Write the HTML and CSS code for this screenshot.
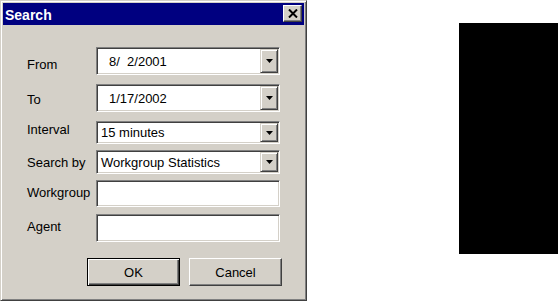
FILE: index.html
```html
<!DOCTYPE html>
<html lang="en">
<head>
    <meta charset="UTF-8">
    <title>Search</title>
    <link rel="stylesheet" href="styles.css">
</head>
<body>

    <div class="dialog">
        <div class="titlebar">
            <span class="title">Search</span>
            <button class="close-btn" type="button">
                <svg width="10" height="9" viewBox="0 0 10 9">
                    <path d="M1 0.5 L9 8.5 M9 0.5 L1 8.5" stroke="#000" stroke-width="2" fill="none"/>
                </svg>
            </button>
        </div>

        <form class="search-form">
            <div class="form-row">
                <label class="field-label label-from">From</label>
                <div class="combo combo-date">
                    <span class="combo-value">8/&nbsp;&nbsp;2/2001</span>
                    <span class="drop-btn"><svg width="7" height="4" viewBox="0 0 7 4"><polygon points="0,0 7,0 3.5,4" fill="#000"/></svg></span>
                </div>
            </div>

            <div class="form-row row-to">
                <label class="field-label label-to">To</label>
                <div class="combo combo-date">
                    <span class="combo-value">1/17/2002</span>
                    <span class="drop-btn"><svg width="7" height="4" viewBox="0 0 7 4"><polygon points="0,0 7,0 3.5,4" fill="#000"/></svg></span>
                </div>
            </div>

            <div class="form-row row-interval">
                <label class="field-label label-interval">Interval</label>
                <div class="combo combo-short">
                    <span class="combo-value">15 minutes</span>
                    <span class="drop-btn"><svg width="7" height="4" viewBox="0 0 7 4"><polygon points="0,0 7,0 3.5,4" fill="#000"/></svg></span>
                </div>
            </div>

            <div class="form-row row-searchby">
                <label class="field-label">Search by</label>
                <div class="combo combo-searchby">
                    <span class="combo-value">Workgroup Statistics</span>
                    <span class="drop-btn"><svg width="7" height="4" viewBox="0 0 7 4"><polygon points="0,0 7,0 3.5,4" fill="#000"/></svg></span>
                </div>
            </div>

            <div class="form-row row-workgroup">
                <label class="field-label">Workgroup</label>
                <div class="combo text-box workgroup-box"></div>
            </div>

            <div class="form-row row-agent">
                <label class="field-label">Agent</label>
                <div class="combo text-box"></div>
            </div>

            <div class="button-row">
                <button class="push-btn is-default" type="button">OK</button>
                <button class="push-btn" type="button">Cancel</button>
            </div>
        </form>
    </div>

    <div class="blackout"></div>

</body>
</html>
```

FILE: styles.css
```css
body {
    font-family: "Liberation Sans", Arial, sans-serif;
    font-size: 13px;
    color: #000;
    background-color: #fff;
    margin: 0;
    display: flex;
    align-items: flex-start;
}

/* window frame, classic 3D look */
.dialog {
    width: 307px;
    height: 301px;
    box-sizing: border-box;
    background-color: #d4d0c8;
    border: 1px solid;
    border-color: #d4d0c8 #404040 #404040 #d4d0c8;
    box-shadow: inset 1px 1px #fff, inset -1px -1px #808080;
    padding: 2px;
}

.titlebar {
    height: 22px;
    background-color: #000080;
    color: #fff;
    display: flex;
    align-items: flex-start;
    justify-content: space-between;
}

.title {
    font-weight: bold;
    font-size: 14px;
    line-height: 16px;
    padding: 4px 0 0 2px;
}

.close-btn {
    width: 19px;
    height: 17px;
    margin: 2px 2px 0 0;
    padding: 0;
    box-sizing: border-box;
    background-color: #d4d0c8;
    border: 1px solid;
    border-color: #fff #404040 #404040 #fff;
    box-shadow: inset -1px -1px #808080;
    display: flex;
    align-items: center;
    justify-content: center;
}

.search-form {
    margin: 0;
    padding: 22px 0 0 24px;
}

.form-row {
    display: flex;
    align-items: flex-start;
}

.row-to { margin-top: 9px; }
.row-interval { margin-top: 9px; }
.row-searchby { margin-top: 6px; }
.row-workgroup { margin-top: 6px; }
.row-agent { margin-top: 7px; }

.field-label {
    width: 69px;
    line-height: 15px;
    padding-top: 5px;
}

.label-from { padding-top: 10px; }
.label-to { padding-top: 8px; }
.label-interval { padding-top: 1px; }

/* sunken white field */
.combo {
    width: 184px;
    height: 28px;
    box-sizing: border-box;
    display: flex;
    align-items: center;
    background-color: #fff;
    border: 1px solid;
    border-color: #808080 #fff #fff #808080;
    box-shadow: inset 1px 1px #404040, inset -1px -1px #d4d0c8;
    padding: 1px;
}

.combo-short { height: 23px; }
.combo-searchby { height: 24px; }
.workgroup-box { height: 27px; }

.combo-value {
    flex-grow: 1;
    line-height: 15px;
    padding-left: 3px;
    white-space: nowrap;
}

.combo-date .combo-value {
    padding-left: 11px;
}

.drop-btn {
    align-self: stretch;
    width: 18px;
    box-sizing: border-box;
    background-color: #d4d0c8;
    border: 1px solid;
    border-color: #d4d0c8 #404040 #404040 #d4d0c8;
    box-shadow: inset 1px 1px #fff, inset -1px -1px #808080;
    display: flex;
    align-items: center;
    justify-content: center;
}

.drop-btn svg {
    display: block;
}

.button-row {
    display: flex;
    gap: 9px;
    margin-top: 16px;
    padding-left: 60px;
}

.push-btn {
    width: 93px;
    height: 28px;
    box-sizing: border-box;
    padding: 0;
    font: inherit;
    color: #000;
    background-color: #d4d0c8;
    border: 1px solid;
    border-color: #fff #404040 #404040 #fff;
    box-shadow: inset -1px -1px #808080;
}

.push-btn.is-default {
    border-color: #000;
    box-shadow: inset 1px 1px #fff, inset -1px -1px #404040, inset -2px -2px #808080;
}

.blackout {
    width: 99px;
    height: 231px;
    margin: 23px 0 0 auto;
    background-color: #000;
}
```
